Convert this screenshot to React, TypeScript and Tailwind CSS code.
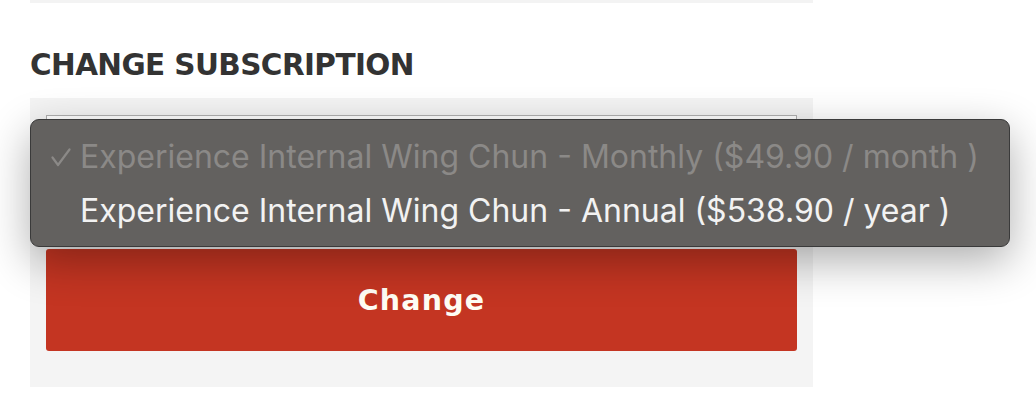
import React from "react";

export default function App() {
  return (
    <div className="relative w-[1036px] h-[402px] bg-white overflow-hidden">
      <div className="ml-[30px] w-[783px] flex flex-col">
        <div className="h-[3px] bg-[#f3f3f3]" />
        <h2
          className="mt-[45px] h-[50px] text-[29.5px] font-bold leading-[34px] text-[#333333] tracking-[-0.6px]"
          style={{ fontFamily: '"DejaVu Sans", sans-serif' }}
        >
          CHANGE SUBSCRIPTION
        </h2>
        <div className="bg-[#f4f4f4] pt-[17px] px-[16px] pb-[36px] flex flex-col gap-[32px]">
          <div className="h-[102px] border border-[#b0b0b0] bg-white" />
          <button
            className="h-[102px] rounded-[3px] bg-[#c43522] text-[#fffdf5] text-[28.5px] font-bold tracking-[1.2px] pt-[2px]"
            style={{ fontFamily: '"DejaVu Sans", sans-serif' }}
          >
            Change
          </button>
        </div>
      </div>

      <div
        className="absolute left-[30px] top-[119px] w-[980px] h-[128px] rounded-[9px] border border-[#3a3a3a] bg-[#63615f] shadow-[0_14px_44px_rgba(0,0,0,0.32)] flex flex-col pt-[10px] text-[32px] leading-[54px]"
        style={{ fontFamily: 'Inter, sans-serif' }}
      >
        <div className="relative flex items-center text-[#8b8987]">
          <svg
            className="absolute left-[20px] top-[18px]"
            width="20"
            height="19"
            viewBox="0 0 20 19"
            fill="none"
          >
            <polyline
              points="1.5,9.5 7,17 18.5,1.5"
              stroke="#8b8987"
              strokeWidth="2.2"
              strokeLinecap="round"
              strokeLinejoin="round"
            />
          </svg>
          <span className="w-[49px]" />
          <span>Experience Internal Wing Chun - Monthly ($49.90 / month )</span>
        </div>
        <div className="flex items-center text-[#f2f2f2]">
          <span className="w-[49px]" />
          <span>Experience Internal Wing Chun - Annual ($538.90 / year )</span>
        </div>
      </div>
    </div>
  );
}
